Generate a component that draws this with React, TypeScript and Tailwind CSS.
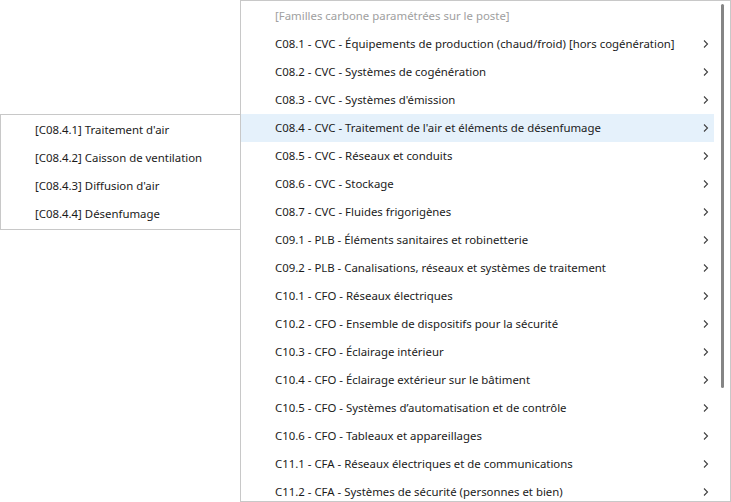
import React from "react";

const items = [
  "C08.1 - CVC - Équipements de production (chaud/froid) [hors cogénération]",
  "C08.2 - CVC - Systèmes de cogénération",
  "C08.3 - CVC - Systèmes d'émission",
  "C08.4 - CVC - Traitement de l'air et éléments de désenfumage",
  "C08.5 - CVC - Réseaux et conduits",
  "C08.6 - CVC - Stockage",
  "C08.7 - CVC - Fluides frigorigènes",
  "C09.1 - PLB - Éléments sanitaires et robinetterie",
  "C09.2 - PLB - Canalisations, réseaux et systèmes de traitement",
  "C10.1 - CFO - Réseaux électriques",
  "C10.2 - CFO - Ensemble de dispositifs pour la sécurité",
  "C10.3 - CFO - Éclairage intérieur",
  "C10.4 - CFO - Éclairage extérieur sur le bâtiment",
  "C10.5 - CFO - Systèmes d’automatisation et de contrôle",
  "C10.6 - CFO - Tableaux et appareillages",
  "C11.1 - CFA - Réseaux électriques et de communications",
  "C11.2 - CFA - Systèmes de sécurité (personnes et bien)",
];

const sub = [
  "[C08.4.1] Traitement d'air",
  "[C08.4.2] Caisson de ventilation",
  "[C08.4.3] Diffusion d'air",
  "[C08.4.4] Désenfumage",
];

function Chevron() {
  return (
    <svg width="6" height="10" viewBox="0 0 6 10" className="shrink-0">
      <path d="M1 1.5 L4.5 5 L1 8.5" fill="none" stroke="#404040" strokeWidth="1.1" />
    </svg>
  );
}

export default function App() {
  return (
    <div
      className="relative flex w-[731px] h-[502px] items-start bg-white text-[11.4px] text-[#1b1b1b] overflow-hidden"
      style={{ fontFamily: '"Noto Sans", "Segoe UI", sans-serif' }}
    >
      <div className="mt-[114px] w-[241px] shrink-0 border border-[#c8c8c8] bg-white py-px z-10 relative">
        {sub.map((s) => (
          <div key={s} className="flex h-[28px] items-center pl-[34px]">
            {s}
          </div>
        ))}
      </div>
      <div className="-ml-px flex h-[502px] w-[491px] shrink-0 border border-[#c8c8c8] bg-white pt-px overflow-hidden">
        <div className="flex w-[473px] flex-col">
          <div className="flex h-[28px] shrink-0 items-center pl-[34px] text-[#a0a0a0]">
            [Familles carbone paramétrées sur le poste]
          </div>
          {items.map((it, i) => (
            <div
              key={it}
              className={
                i === 3
                  ? "flex h-[28px] shrink-0 items-center justify-between bg-[#e5f1fb] pl-[34px] pr-[5px]"
                  : "flex h-[28px] shrink-0 items-center justify-between pl-[34px] pr-[5px]"
              }
            >
              <span className="whitespace-nowrap">{it}</span>
              <Chevron />
            </div>
          ))}
        </div>
        <div className="flex flex-1 justify-center pt-[2px] pl-[1px]">
          <div className="h-[384px] w-[3px] rounded-full bg-[#858585]" />
        </div>
      </div>
    </div>
  );
}
